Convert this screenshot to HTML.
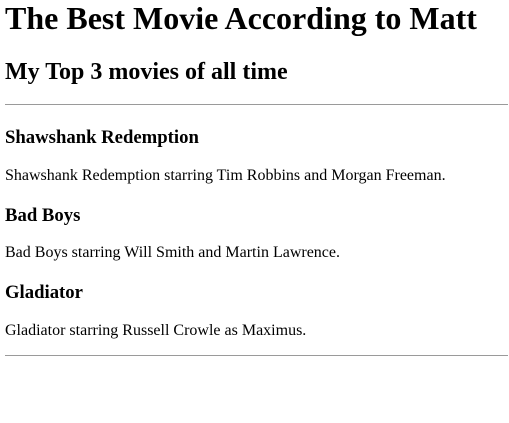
<!DOCTYPE html>
<html><head><meta charset="utf-8"><style>
html,body{margin:0;padding:0;background:#fff;width:509px;height:423px;overflow:hidden}
body{font-family:"Liberation Serif",serif;color:#000;position:relative}
.a{position:absolute;left:5px;margin:0;white-space:nowrap;line-height:normal}
h1{font-size:32px}
h2{font-size:24px}
h3{font-size:18.72px}
p{font-size:16px}
hr{position:absolute;left:5px;width:503px;margin:0;border:0;border-top:1px solid #9a9a9a;height:0}
</style></head><body>
<h1 class="a" style="top:0px">The Best Movie According to Matt</h1>
<h2 class="a" style="top:59px">My Top 3 movies of all time</h2>
<hr style="top:104px">
<h3 class="a" style="top:127px">Shawshank Redemption</h3>
<p class="a" style="top:167px">Shawshank Redemption starring Tim Robbins and Morgan Freeman.</p>
<h3 class="a" style="top:205px">Bad Boys</h3>
<p class="a" style="top:244px">Bad Boys starring Will Smith and Martin Lawrence.</p>
<h3 class="a" style="top:282px">Gladiator</h3>
<p class="a" style="top:322px">Gladiator starring Russell Crowle as Maximus.</p>
<hr style="top:355px">
</body></html>
